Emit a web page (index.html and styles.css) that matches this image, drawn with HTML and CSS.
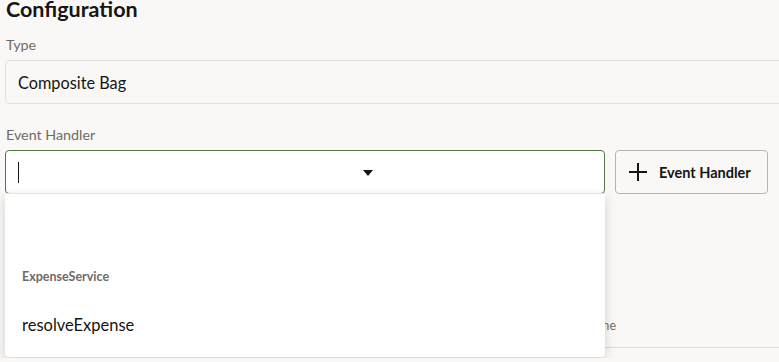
FILE: index.html
```html
<!DOCTYPE html>
<html lang="en">
<head>
<meta charset="utf-8">
<title>Configuration</title>
<link rel="stylesheet" href="styles.css">
</head>
<body>
<div class="page">
  <h2 class="title">Configuration</h2>
  <div class="label">Type</div>
  <div class="readonly">Composite Bag</div>
  <div class="label label-second">Event Handler</div>
  <div class="row">
    <div class="select-wrap">
      <div class="select">
        <div class="select-text"><span class="caret"></span></div>
        <span class="arrow"></span>
      </div>
      <div class="dropdown">
        <div class="group">ExpenseService</div>
        <div class="option">resolveExpense</div>
      </div>
    </div>
    <button class="btn" type="button">
      <svg class="plus" width="20" height="20" viewBox="0 0 20 20" aria-hidden="true"><path d="M10 1v18M1 10h18" stroke="#161513" stroke-width="2" fill="none"/></svg>
      <span>Event Handler</span>
    </button>
  </div>
  <div class="hint">Select the handler by name</div>
  <div class="divider"></div>
</div>
</body>
</html>
```
FILE: styles.css
```css
html {
  margin: 0;
  padding: 0;
  overflow: hidden;
  background: #f9f8f6;
}
body {
  margin: 0;
  padding: 0;
  background: #f9f8f6;
  font-family: Lato, "Noto Sans", sans-serif;
  color: #161513;
}
.page {
  width: 800px;
  height: 362px;
  padding-left: 5px;
}
.title {
  margin: -4px 0 0 1px;
  font-size: 21.5px;
  line-height: 26px;
  font-weight: 700;
}
.label {
  margin: 14px 0 0 1px;
  font-size: 14.3px;
  line-height: 18px;
  color: #6f6c68;
}
.label-second {
  margin-top: 22px;
}
.readonly {
  margin-top: 6px;
  box-sizing: border-box;
  height: 44px;
  border: 1px solid #e1dfdc;
  border-radius: 5px;
  display: flex;
  align-items: center;
  padding-left: 12px;
  font-size: 16.3px;
}
.row {
  margin-top: 6px;
  display: flex;
  gap: 10px;
}
.select-wrap {
  position: relative;
  width: 600px;
}
.select {
  box-sizing: border-box;
  height: 44px;
  border: 1px solid #52773f;
  border-radius: 4px;
  background: #fff;
  display: flex;
  align-items: center;
  padding-left: 12px;
}
.select-text {
  flex: 0 0 345px;
  display: flex;
  align-items: center;
}
.caret {
  display: block;
  width: 1px;
  height: 21px;
  background: #161513;
}
.arrow {
  width: 0;
  height: 0;
  border-left: 5px solid transparent;
  border-right: 5px solid transparent;
  border-top: 6px solid #161513;
  margin-top: 2px;
}
.dropdown {
  position: absolute;
  left: 0;
  top: 43px;
  width: 600px;
  height: 164px;
  box-sizing: border-box;
  background: #fff;
  border-top: 1px solid #e6e4e1;
  border-radius: 0 0 4px 4px;
  box-shadow: 0 4px 12px rgba(0, 0, 0, 0.16);
  padding: 76px 0 0 17px;
  z-index: 2;
}
.group {
  font-size: 12.5px;
  font-weight: 700;
  color: #6f6c68;
  line-height: 14px;
}
.option {
  margin-top: 31px;
  font-size: 16.5px;
  line-height: 20px;
}
.btn {
  box-sizing: border-box;
  width: 153px;
  height: 44px;
  border: 1px solid #b7b4af;
  border-radius: 4px;
  background: #f9f8f6;
  display: flex;
  align-items: center;
  gap: 11px;
  padding: 0 0 0 12px;
  font-family: inherit;
  font-size: 14.5px;
  font-weight: 700;
  color: #161513;
}
.plus {
  display: block;
}
.hint {
  width: 611px;
  text-align: right;
  margin-top: 124px;
  font-size: 12.5px;
  line-height: 16px;
  color: #6f6c68;
}
.divider {
  margin-top: 13px;
  height: 1px;
  background: #dedbd7;
}
```
